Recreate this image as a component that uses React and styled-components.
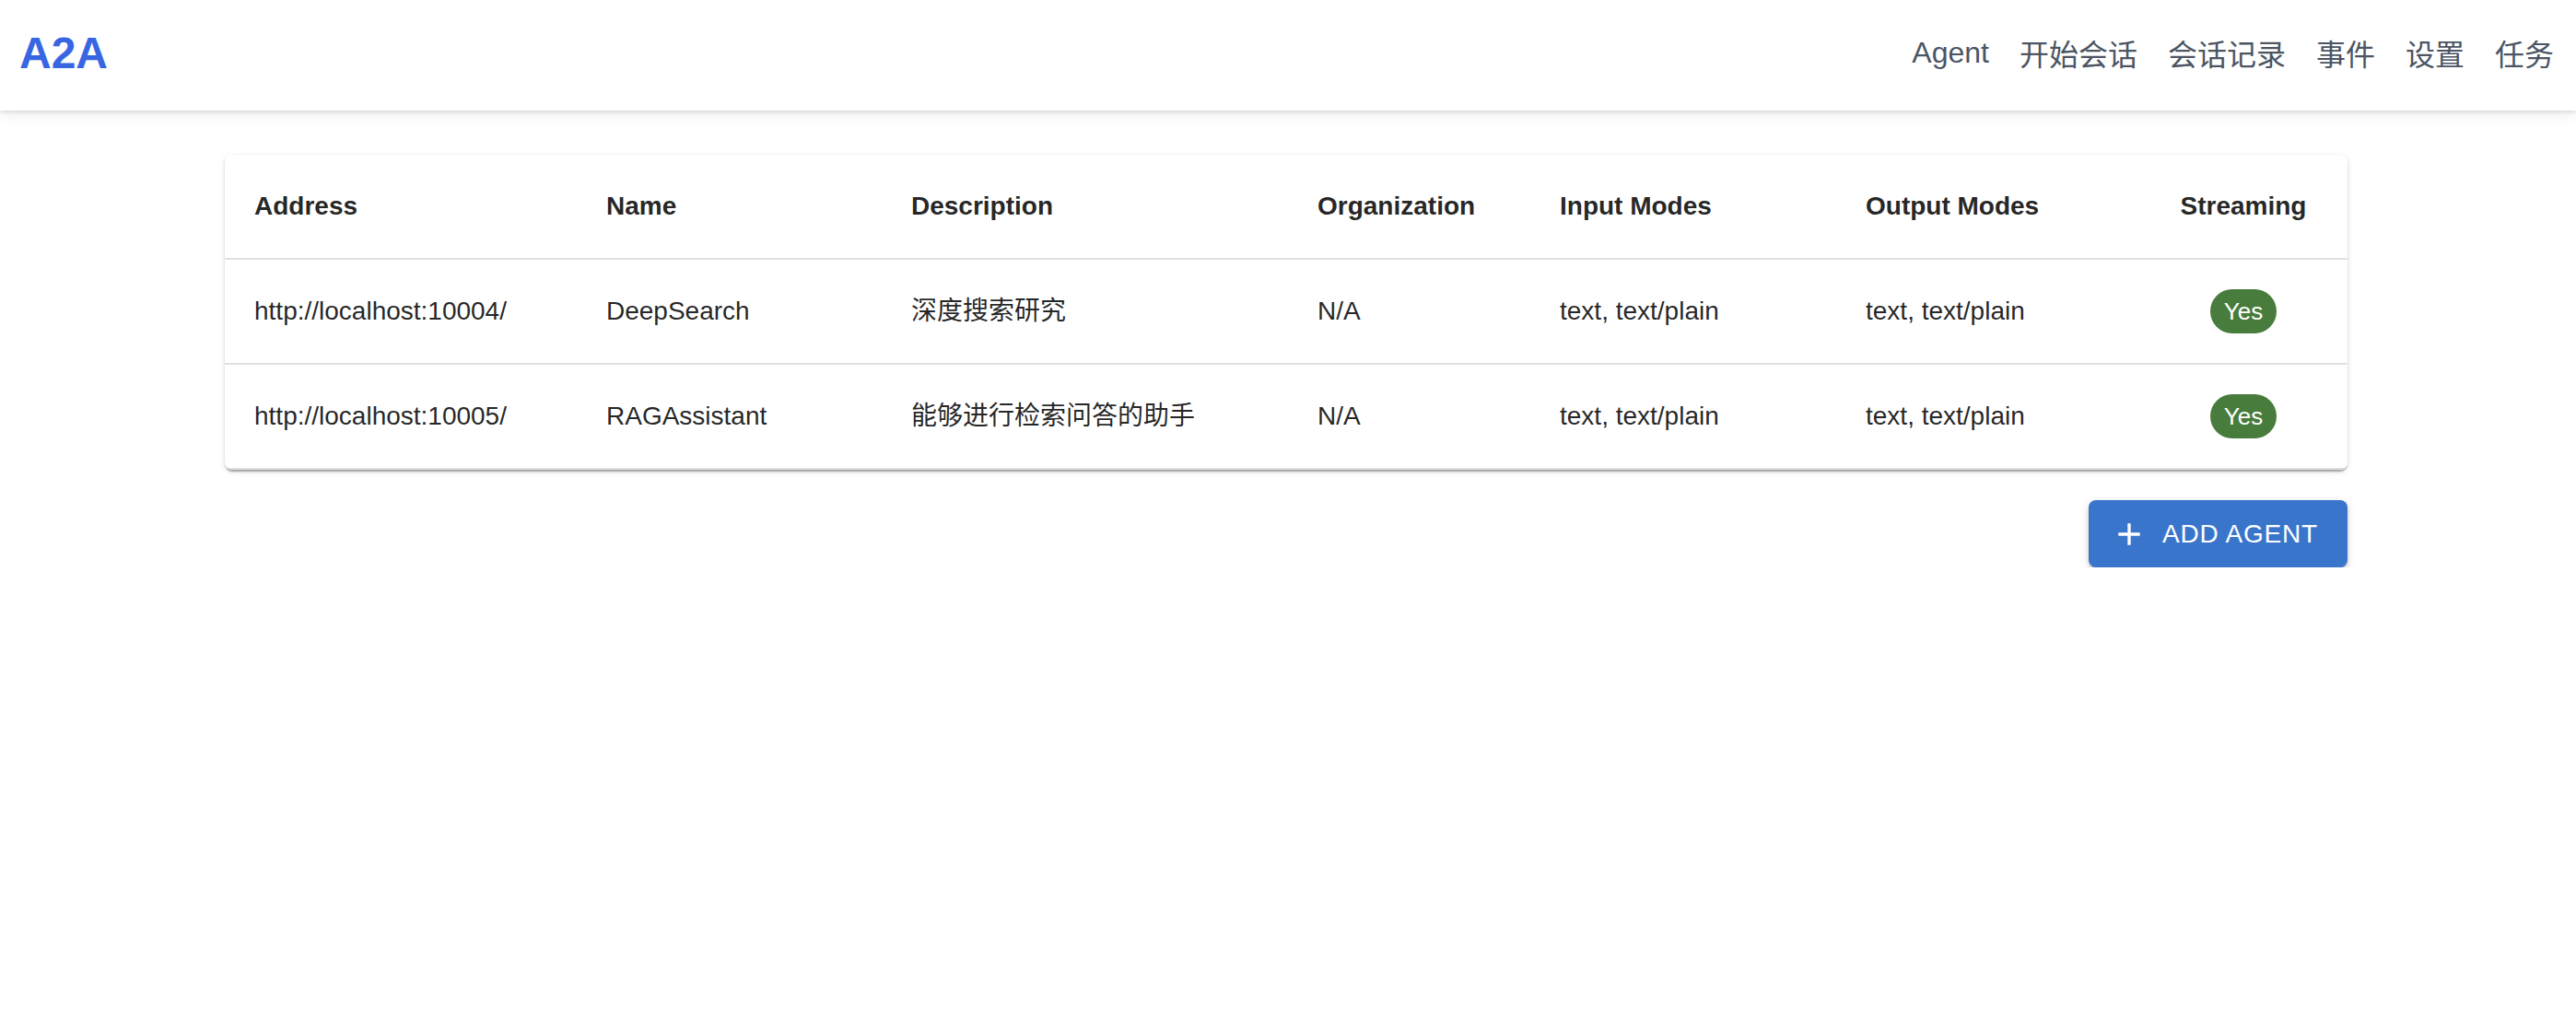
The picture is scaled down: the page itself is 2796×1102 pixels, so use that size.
import React from "react";
import styled, { createGlobalStyle } from "styled-components";

const GlobalStyle = createGlobalStyle`
  html, body {
    margin: 0;
    padding: 0;
    background: #ffffff;
  }
  body {
    font-family: "Liberation Sans", "Noto Sans CJK SC", sans-serif;
    color: rgba(0, 0, 0, 0.87);
  }
`;

const AppBar = styled.header`
  display: flex;
  align-items: center;
  justify-content: space-between;
  box-sizing: border-box;
  height: 120px;
  padding: 0 24px 6px 21px;
  background: #ffffff;
  box-shadow: 0 2px 4px rgba(0, 0, 0, 0.1), 0 6px 14px rgba(0, 0, 0, 0.06);
  position: relative;
  z-index: 1;
`;
const Logo = styled.div`
  font-size: 48px;
  font-weight: 700;
  color: #3866e3;
`;
const Nav = styled.nav`
  display: flex;
  align-items: center;
  gap: 33px;
`;
const NavLink = styled.a`
  font-size: 32px;
  color: #4b5563;
  text-decoration: none;
  cursor: pointer;
`;

const Main = styled.main`
  display: flex;
  flex-direction: column;
  padding: 48px 248px 0 244px;
`;
const Card = styled.div`
  background: #ffffff;
  border-radius: 8px;
  overflow: hidden;
  box-shadow: 0 4px 2px -2px rgba(0, 0, 0, 0.2), 0 2px 2px 0 rgba(0, 0, 0, 0.14),
    0 2px 6px 0 rgba(0, 0, 0, 0.12);
`;
const Table = styled.table`
  width: 100%;
  table-layout: fixed;
  border-collapse: collapse;
`;
const HeadCell = styled.th`
  padding: 32px;
  font-size: 28px;
  font-weight: 700;
  line-height: 48px;
  text-align: ${(p) => p.$align || "left"};
  color: rgba(0, 0, 0, 0.87);
  border-bottom: 2px solid #e0e0e0;
  white-space: nowrap;
`;
const BodyCell = styled.td`
  height: 48px;
  padding: 32px;
  font-size: 28px;
  line-height: 48px;
  text-align: ${(p) => p.$align || "left"};
  color: rgba(0, 0, 0, 0.87);
  border-bottom: 2px solid #e0e0e0;
  white-space: nowrap;
`;
const Chip = styled.span`
  display: inline-flex;
  align-items: center;
  justify-content: center;
  box-sizing: border-box;
  height: 48px;
  padding: 0 15px;
  border-radius: 24px;
  background: #477c3d;
  color: #ffffff;
  font-size: 26px;
  line-height: 1;
  vertical-align: top;
`;

const Actions = styled.div`
  display: flex;
  justify-content: flex-end;
  margin-top: 33px;
`;
const AddButton = styled.button`
  display: inline-flex;
  align-items: center;
  height: 73px;
  padding: 0 32px 0 24px;
  border: none;
  border-radius: 8px;
  background: #3a75cc;
  color: #ffffff;
  font-family: inherit;
  font-size: 28px;
  letter-spacing: 0.8px;
  text-transform: uppercase;
  cursor: pointer;
  box-shadow: 0 6px 2px -4px rgba(0, 0, 0, 0.2), 0 4px 4px 0 rgba(0, 0, 0, 0.14),
    0 2px 10px 0 rgba(0, 0, 0, 0.12);
`;
const ButtonIcon = styled.svg`
  width: 40px;
  height: 40px;
  margin-right: 16px;
  fill: currentColor;
`;

const columns = [
  { key: "address", label: "Address", width: 382 },
  { key: "name", label: "Name", width: 331 },
  { key: "description", label: "Description", width: 441 },
  { key: "organization", label: "Organization", width: 263 },
  { key: "input", label: "Input Modes", width: 332 },
  { key: "output", label: "Output Modes", width: 329 },
  { key: "streaming", label: "Streaming", width: 226, align: "center" },
];

const agents = [
  {
    address: "http://localhost:10004/",
    name: "DeepSearch",
    description: "深度搜索研究",
    organization: "N/A",
    input: "text, text/plain",
    output: "text, text/plain",
    streaming: true,
  },
  {
    address: "http://localhost:10005/",
    name: "RAGAssistant",
    description: "能够进行检索问答的助手",
    organization: "N/A",
    input: "text, text/plain",
    output: "text, text/plain",
    streaming: true,
  },
];

const navItems = ["Agent", "开始会话", "会话记录", "事件", "设置", "任务"];

const App = () => {
  return (
    <>
      <GlobalStyle />
      <AppBar>
        <Logo>A2A</Logo>
        <Nav>
          {navItems.map((item) => (
            <NavLink key={item}>{item}</NavLink>
          ))}
        </Nav>
      </AppBar>
      <Main>
        <Card>
          <Table>
            <colgroup>
              {columns.map((c) => (
                <col key={c.key} style={{ width: c.width }} />
              ))}
            </colgroup>
            <thead>
              <tr>
                {columns.map((c) => (
                  <HeadCell key={c.key} $align={c.align}>
                    {c.label}
                  </HeadCell>
                ))}
              </tr>
            </thead>
            <tbody>
              {agents.map((a) => (
                <tr key={a.address}>
                  <BodyCell>{a.address}</BodyCell>
                  <BodyCell>{a.name}</BodyCell>
                  <BodyCell>{a.description}</BodyCell>
                  <BodyCell>{a.organization}</BodyCell>
                  <BodyCell>{a.input}</BodyCell>
                  <BodyCell>{a.output}</BodyCell>
                  <BodyCell $align="center">
                    <Chip>{a.streaming ? "Yes" : "No"}</Chip>
                  </BodyCell>
                </tr>
              ))}
            </tbody>
          </Table>
        </Card>
        <Actions>
          <AddButton>
            <ButtonIcon viewBox="0 0 24 24">
              <path d="M19 13h-6v6h-2v-6H5v-2h6V5h2v6h6z" />
            </ButtonIcon>
            Add Agent
          </AddButton>
        </Actions>
      </Main>
    </>
  );
};

export default App;
